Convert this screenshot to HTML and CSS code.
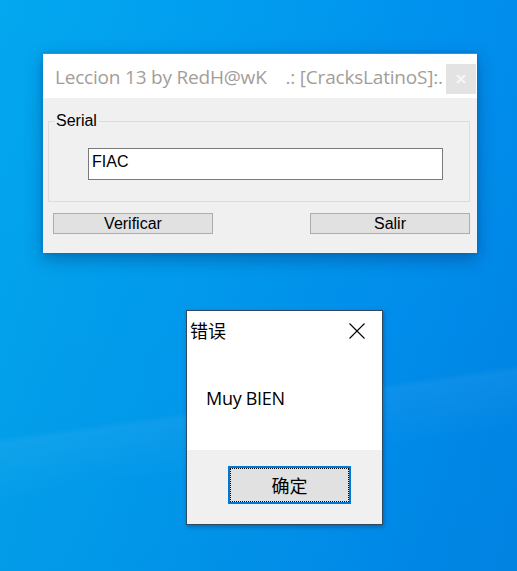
FILE: index.html
```html
<!DOCTYPE html>
<html>
<head>
<meta charset="utf-8">
<link rel="stylesheet" href="styles.css">
</head>
<body>
<div class="desktop">
  <div class="win main-win">
    <div class="titlebar">
      <span class="title">Leccion 13 by RedH@wK    .: [CracksLatinoS]:.</span>
      <span class="close-btn"><svg width="12" height="12" viewBox="0 0 12 12"><path d="M2 2 L10 10 M10 2 L2 10" stroke="#f7f7f7" stroke-width="2"/></svg></span>
    </div>
    <div class="client">
      <fieldset class="group">
        <legend>Serial</legend>
        <div class="edit">FIAC</div>
      </fieldset>
      <div class="btn-row">
        <div class="btn">Verificar</div>
        <div class="btn">Salir</div>
      </div>
    </div>
  </div>

  <div class="win msgbox">
    <div class="msg-top">
      <div class="msg-title">
        <span>错误</span>
        <svg class="msg-x" width="16" height="16" viewBox="0 0 16 16"><path d="M0.5 0.5 L15.5 15.5 M15.5 0.5 L0.5 15.5" stroke="#000" stroke-width="1.1"/></svg>
      </div>
      <div class="msg-text">Muy BIEN</div>
    </div>
    <div class="msg-bottom">
      <div class="ok-btn"><span class="focus">确定</span></div>
    </div>
  </div>
</div>
</body>
</html>
```

FILE: styles.css
```css
html, body {
  margin: 0;
  padding: 0;
}
body {
  width: 517px;
  height: 571px;
  overflow: hidden;
}
.desktop {
  position: relative;
  width: 517px;
  height: 571px;
  background:
    linear-gradient(172deg, rgba(255,255,255,0) 0%, rgba(255,255,255,0) 68%, rgba(255,255,255,0.05) 69%, rgba(255,255,255,0) 78%),
    linear-gradient(180deg, rgba(0,0,0,0) 0%, rgba(0,40,120,0.06) 100%),
    linear-gradient(100deg, #03a8ef 0%, #019cef 40%, #0090ee 75%, #0088e8 100%);
}
.win {
  position: absolute;
  box-sizing: border-box;
}
.main-win {
  left: 43px;
  top: 53px;
  width: 434px;
  height: 200px;
  background: #f0f0f0;
  border-top: 1px solid #3a8fd6;
  box-shadow: 0 6px 16px rgba(0, 30, 80, 0.35), 0 0 4px rgba(0, 30, 80, 0.15);
}
.titlebar {
  height: 44px;
  background: #ffffff;
  display: flex;
  align-items: center;
  padding-left: 12px;
  position: relative;
}
.title {
  font-family: "Open Sans", "Noto Sans", sans-serif;
  font-size: 19px;
  color: #a39d99;
  white-space: pre;
  letter-spacing: -0.2px;
  margin-top: 2px;
}
.close-btn {
  position: absolute;
  left: 403px;
  top: 10px;
  width: 30px;
  height: 30px;
  background: #e3e3e3;
  display: flex;
  align-items: center;
  justify-content: center;
}
.client {
  padding: 14px 7px 0 5px;
  font-family: "Liberation Sans", Arial, sans-serif;
  font-size: 16px;
  color: #000;
}
.group {
  margin: 0;
  border: 1px solid #dcdcdc;
  padding: 0;
  height: 90px;
  box-sizing: border-box;
}
.group legend {
  padding: 0 2px;
  margin-left: 5px;
  line-height: 18px;
  font-size: 16px;
}
.edit {
  margin: 18px 26px 0 39px;
  height: 32px;
  box-sizing: border-box;
  background: #fff;
  border: 1px solid #7a7a7a;
  padding: 4px 3px 0;
  line-height: 18px;
}
.btn-row {
  display: flex;
  justify-content: space-between;
  margin-top: 11px;
  padding-left: 5px;
}
.btn {
  width: 160px;
  height: 21px;
  box-sizing: border-box;
  background: #e1e1e1;
  border: 1px solid #adadad;
  text-align: center;
  line-height: 18px;
  padding-top: 1px;
}

.msgbox {
  left: 186px;
  top: 310px;
  width: 197px;
  height: 215px;
  border: 1px solid #2f4a60;
  background: #f0f0f0;
  display: flex;
  flex-direction: column;
  box-shadow: 1px 2px 4px rgba(0, 20, 60, 0.3);
}
.msg-top {
  background: #fff;
  height: 139px;
}
.msg-title {
  display: flex;
  align-items: center;
  justify-content: space-between;
  padding: 8px 17px 0 3px;
  font-family: "Noto Sans CJK SC", sans-serif;
  font-size: 18px;
  line-height: 22px;
  color: #000;
}
.msg-x {
  display: block;
  margin-top: 1px;
}
.msg-text {
  margin-top: 47px;
  padding-left: 19px;
  font-family: "Open Sans", "Noto Sans", sans-serif;
  font-size: 18px;
  line-height: 20px;
  color: #000;
  letter-spacing: -0.3px;
}
.msg-bottom {
  flex: 1;
  background: #f0f0f0;
  padding: 16px 0 0 41px;
}
.ok-btn {
  width: 123px;
  height: 38px;
  box-sizing: border-box;
  border: 2px solid #0078d7;
  background: #e1e1e1;
  display: flex;
}
.focus {
  flex: 1;
  border: 1px dotted #000;
  display: flex;
  align-items: center;
  justify-content: center;
  font-family: "Noto Sans CJK SC", sans-serif;
  font-size: 18px;
  color: #000;
}
```
